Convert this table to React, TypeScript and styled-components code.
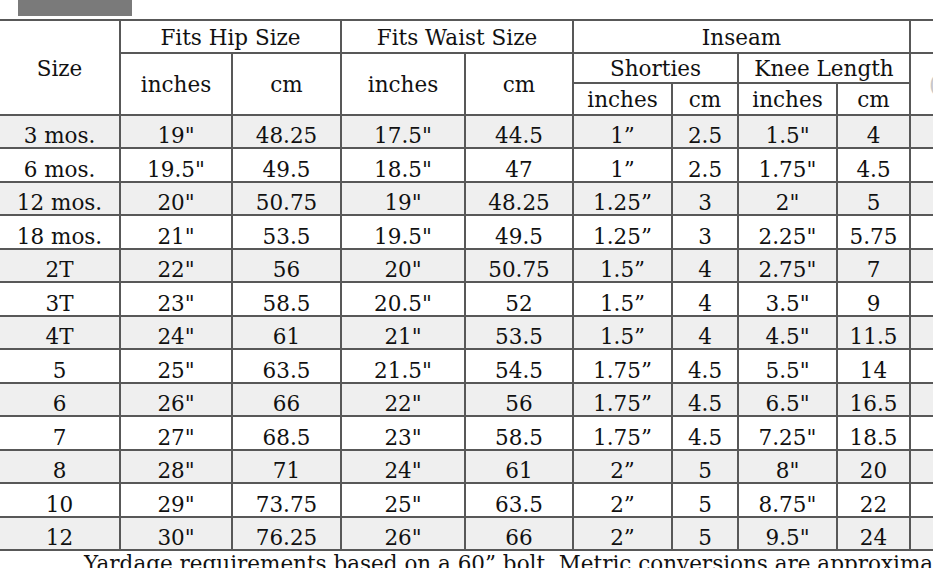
import React from "react";
import styled, { createGlobalStyle } from "styled-components";

const Global = createGlobalStyle`
  html, body { margin: 0; padding: 0; overflow: hidden; background: #fff; }
  body { font-family: "DejaVu Serif", "Liberation Serif", serif; color: #111; }
`;

const Page = styled.div`
  width: 933px;
  height: 568px;
  overflow: hidden;
  display: flex;
  flex-direction: column;
`;

const TopBar = styled.div`
  margin-left: 18px;
  width: 114px;
  height: 16px;
  background: #7a7a7a;
  flex: none;
`;

const Grid = styled.div`
  margin-top: 3px;
  flex: none;
  width: 1011px;
  display: grid;
  grid-template-columns: 119px 110px 107px 122px 106px 97px 64px 97px 71px 100px;
  grid-template-rows: 31px 28px 30px repeat(6, 31px 32px) 31px;
  gap: 2px;
  padding: 2px 0;
  background: #585858;
  font-size: 21.5px;
`;

const HeadCell = styled.div<{ $c: string; $r: string; $start?: boolean }>`
  grid-column: ${(p) => p.$c};
  grid-row: ${(p) => p.$r};
  background: #fff;
  display: flex;
  align-items: center;
  justify-content: ${(p) => (p.$start ? "flex-start" : "center")};
  line-height: 25px;
  white-space: nowrap;
  padding-top: 1px;
`;

const Ghost = styled.span`
  color: #c8c8c8;
  margin-left: 18px;
`;

const DataCell = styled.div<{ $shade: boolean }>`
  background: ${(p) => (p.$shade ? "#efefef" : "#fff")};
  display: flex;
  align-items: flex-end;
  justify-content: center;
  line-height: 23px;
  white-space: nowrap;
`;

const Note = styled.p`
  margin: 0;
  padding-left: 84px;
  font-size: 21.5px;
  line-height: 25px;
  white-space: nowrap;
`;

const rows: string[][] = [
  ["3 mos.", '19"', "48.25", '17.5"', "44.5", "1”", "2.5", '1.5"', "4"],
  ["6 mos.", '19.5"', "49.5", '18.5"', "47", "1”", "2.5", '1.75"', "4.5"],
  ["12 mos.", '20"', "50.75", '19"', "48.25", "1.25”", "3", '2"', "5"],
  ["18 mos.", '21"', "53.5", '19.5"', "49.5", "1.25”", "3", '2.25"', "5.75"],
  ["2T", '22"', "56", '20"', "50.75", "1.5”", "4", '2.75"', "7"],
  ["3T", '23"', "58.5", '20.5"', "52", "1.5”", "4", '3.5"', "9"],
  ["4T", '24"', "61", '21"', "53.5", "1.5”", "4", '4.5"', "11.5"],
  ["5", '25"', "63.5", '21.5"', "54.5", "1.75”", "4.5", '5.5"', "14"],
  ["6", '26"', "66", '22"', "56", "1.75”", "4.5", '6.5"', "16.5"],
  ["7", '27"', "68.5", '23"', "58.5", "1.75”", "4.5", '7.25"', "18.5"],
  ["8", '28"', "71", '24"', "61", "2”", "5", '8"', "20"],
  ["10", '29"', "73.75", '25"', "63.5", "2”", "5", '8.75"', "22"],
  ["12", '30"', "76.25", '26"', "66", "2”", "5", '9.5"', "24"],
];

export default function App() {
  return (
    <Page>
      <Global />
      <TopBar />
      <Grid>
        <HeadCell $c="1" $r="1 / span 3">Size</HeadCell>
        <HeadCell $c="2 / span 2" $r="1">Fits Hip Size</HeadCell>
        <HeadCell $c="4 / span 2" $r="1">Fits Waist Size</HeadCell>
        <HeadCell $c="6 / span 4" $r="1">Inseam</HeadCell>
        <HeadCell $c="10" $r="1" />
        <HeadCell $c="2" $r="2 / span 2">inches</HeadCell>
        <HeadCell $c="3" $r="2 / span 2">cm</HeadCell>
        <HeadCell $c="4" $r="2 / span 2">inches</HeadCell>
        <HeadCell $c="5" $r="2 / span 2">cm</HeadCell>
        <HeadCell $c="6 / span 2" $r="2">Shorties</HeadCell>
        <HeadCell $c="8 / span 2" $r="2">Knee Length</HeadCell>
        <HeadCell $c="10" $r="2 / span 2" $start>
          <Ghost>(</Ghost>
        </HeadCell>
        <HeadCell $c="6" $r="3">inches</HeadCell>
        <HeadCell $c="7" $r="3">cm</HeadCell>
        <HeadCell $c="8" $r="3">inches</HeadCell>
        <HeadCell $c="9" $r="3">cm</HeadCell>
        {rows.map((r, i) => (
          <React.Fragment key={i}>
            {r.map((v, j) => (
              <DataCell key={j} $shade={i % 2 === 0}>
                {v}
              </DataCell>
            ))}
            <DataCell $shade={i % 2 === 0} />
          </React.Fragment>
        ))}
      </Grid>
      <Note>Yardage requirements based on a 60” bolt. Metric conversions are approximate.</Note>
    </Page>
  );
}
